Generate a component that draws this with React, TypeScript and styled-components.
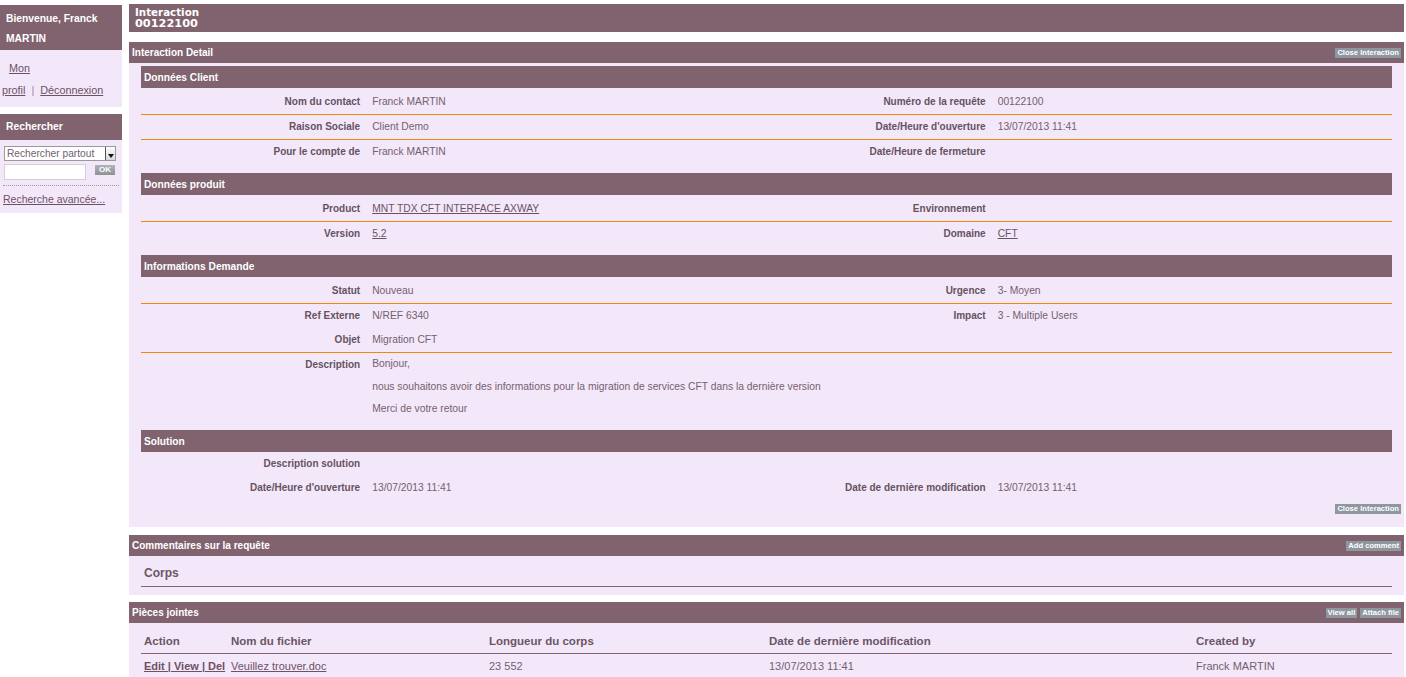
import styled, { createGlobalStyle } from 'styled-components';

const MAUVE = '#80636f';
const LAVENDER = '#f3e8fa';
const ORANGE = '#f0880a';
const LABEL = '#665260';
const VALUE = '#75606e';
const LINK = '#6d5164';

const GlobalStyle = createGlobalStyle`
    body {
        margin: 0;
        background: #fff;
        font-family: "Liberation Sans", Arial, sans-serif;
    }
`;

const Layout = styled.div`
    display: flex;
    align-items: flex-start;
    gap: 7px;
    width: 1404px;
    padding-top: 4px;
`;

/* ---------- sidebar ---------- */

const Sidebar = styled.div`
    width: 122px;
    flex: none;
    margin-top: 1px;
    display: flex;
    flex-direction: column;
    gap: 7px;
`;

const SideBox = styled.div`
    background: ${LAVENDER};
`;

const SideHeader = styled.div<{ $tall?: boolean }>`
    background: ${MAUVE};
    color: #fff;
    font-weight: bold;
    font-size: 10.3px;
    line-height: 20px;
    padding: ${(p) => (p.$tall ? '4px 6px 1px' : '3px 6px')};
`;

const WelcomeLinks = styled.div`
    padding: 7px 2px 6px;
    font-size: 10.8px;
    line-height: 22px;
    color: #9a8a98;
`;

const SideLink = styled.a<{ $indent?: boolean }>`
    color: ${LINK};
    text-decoration: underline;
    margin-left: ${(p) => (p.$indent ? '7px' : '0')};
`;

const Pipe = styled.span`
    margin: 0 6px;
`;

const SearchBody = styled.div`
    padding: 6px 3px 4px;
    display: flex;
    flex-direction: column;
`;

const SelectBox = styled.div`
    width: 112px;
    height: 15px;
    box-sizing: border-box;
    margin-left: 1px;
    background: #fff;
    border: 1px solid #9a9a9a;
    display: flex;
    align-items: center;
    justify-content: space-between;
    font-size: 10.2px;
    color: ${VALUE};
    padding-left: 2px;
`;

const SelectArrow = styled.span`
    width: 10px;
    height: 13px;
    box-sizing: border-box;
    background: linear-gradient(#fdfdfd, #d8d8d8);
    border-left: 1px solid #555;
    display: flex;
    align-items: flex-end;
    justify-content: center;
    padding-bottom: 2px;

    &::after {
        content: '';
        border-left: 3px solid transparent;
        border-right: 3px solid transparent;
        border-top: 4px solid #111;
    }
`;

const SearchRow = styled.div`
    display: flex;
    align-items: flex-start;
    gap: 9px;
    margin-top: 3px;
`;

const SearchInput = styled.div`
    width: 82px;
    height: 16px;
    box-sizing: border-box;
    margin-left: 1px;
    background: #fff;
    border: 1px solid #d6cdd8;
`;

const OkButton = styled.span`
    margin-top: 1px;
    width: 20px;
    height: 10px;
    background: linear-gradient(#b0b3b8, #8e9196);
    color: #fff;
    font-size: 8px;
    font-weight: bold;
    line-height: 10px;
    text-align: center;
`;

const DottedRule = styled.div`
    border-top: 1px dotted #9c9c9c;
    margin-top: 5px;
`;

const AdvancedLink = styled.a`
    color: ${LINK};
    font-size: 10.5px;
    line-height: 20px;
    margin-top: 3px;
    text-decoration: underline;
`;

/* ---------- main ---------- */

const Main = styled.div`
    flex: 1;
    display: flex;
    flex-direction: column;
`;

const TitleBar = styled.div`
    background: ${MAUVE};
    color: #fff;
    height: 28px;
    box-sizing: border-box;
    padding: 3px 6px 0;
    font-family: "DejaVu Sans", Verdana, sans-serif;
    font-weight: bold;
`;

const TitleLine = styled.div<{ $size: number }>`
    font-size: ${(p) => p.$size}px;
    line-height: 11px;
`;

const Section = styled.section<{ $gap: number }>`
    margin-top: ${(p) => p.$gap}px;
    background: ${LAVENDER};
`;

const SectionHeader = styled.div`
    height: 21px;
    background: ${MAUVE};
    color: #fff;
    font-weight: bold;
    font-size: 10px;
    display: flex;
    align-items: center;
    justify-content: space-between;
    padding: 0 3px;
`;

const ButtonGroup = styled.div`
    display: flex;
    gap: 3px;
`;

const SmallButton = styled.span`
    background: #8e979f;
    color: #fff;
    font-size: 7.6px;
    font-weight: bold;
    height: 10px;
    line-height: 10px;
    padding: 0 2px;
`;

const DetailBody = styled.div`
    padding: 3px 0 13px;
`;

const Inner = styled.div`
    padding: 0 12px;
    display: flex;
    flex-direction: column;
    gap: 9px;
`;

const SubHeader = styled.div<{ $tight?: boolean }>`
    height: 22px;
    line-height: 23px;
    background: ${MAUVE};
    color: #fff;
    font-weight: bold;
    font-size: 10.2px;
    padding-left: 3px;
    margin-bottom: ${(p) => (p.$tight ? '0' : '2px')};
`;

const InfoRow = styled.div<{ $divider?: boolean; $height?: number }>`
    display: grid;
    grid-template-columns: 18% 32% 18% 32%;
    height: ${(p) => p.$height ?? 24}px;
    border-bottom: ${(p) => (p.$divider ? `1px solid ${ORANGE}` : 'none')};
`;

const Label = styled.div`
    text-align: right;
    padding-right: 6px;
    font-weight: bold;
    font-size: 10px;
    line-height: 24px;
    color: ${LABEL};
`;

const Value = styled.div<{ $span?: number }>`
    grid-column: span ${(p) => p.$span ?? 1};
    padding-left: 6px;
    font-size: 10.3px;
    line-height: 24px;
    color: ${VALUE};
`;

const Paragraph = styled.div`
    line-height: 22.5px;
`;

const ValueLink = styled.a`
    color: ${LINK};
    text-decoration: underline;
`;

const Footer = styled.div`
    display: flex;
    justify-content: flex-end;
    padding: 4px 3px 0;
`;

const CommentBody = styled.div`
    padding: 8px 12px;
`;

const CorpsRow = styled.div`
    border-bottom: 1px solid ${MAUVE};
    padding: 0 3px 3px;
    line-height: 19px;
    font-size: 12px;
    font-weight: bold;
    color: #6b5664;
`;

const AttachBody = styled.div`
    padding: 6px 12px 0;
`;

const TableRow = styled.div<{ $head?: boolean }>`
    display: grid;
    grid-template-columns: 87px 258px 280px 427px 1fr;
    border-bottom: 1px solid ${(p) => (p.$head ? MAUVE : 'transparent')};
    line-height: 24px;
    font-size: ${(p) => (p.$head ? '11.5px' : '11px')};
    font-weight: ${(p) => (p.$head ? 'bold' : 'normal')};
    color: ${(p) => (p.$head ? '#6b5664' : VALUE)};
`;

const Cell = styled.div`
    padding-left: 3px;
    white-space: nowrap;
`;

const ActionLinks = styled.a`
    color: ${LINK};
    font-weight: bold;
    text-decoration: underline;
`;

type Field = { label: string; value?: string; link?: boolean };
type Row = { left: Field; right?: Field; divider?: boolean };

const clientRows: Row[] = [
    { left: { label: 'Nom du contact', value: 'Franck MARTIN' }, right: { label: 'Numéro de la requête', value: '00122100' }, divider: true },
    { left: { label: 'Raison Sociale', value: 'Client Demo' }, right: { label: "Date/Heure d'ouverture", value: '13/07/2013 11:41' }, divider: true },
    { left: { label: 'Pour le compte de', value: 'Franck MARTIN' }, right: { label: 'Date/Heure de fermeture' } }
];

const productRows: Row[] = [
    { left: { label: 'Product', value: 'MNT TDX CFT INTERFACE AXWAY', link: true }, right: { label: 'Environnement' }, divider: true },
    { left: { label: 'Version', value: '5.2', link: true }, right: { label: 'Domaine', value: 'CFT', link: true } }
];

const requestRows: Row[] = [
    { left: { label: 'Statut', value: 'Nouveau' }, right: { label: 'Urgence', value: '3- Moyen' }, divider: true },
    { left: { label: 'Ref Externe', value: 'N/REF 6340' }, right: { label: 'Impact', value: '3 - Multiple Users' } },
    { left: { label: 'Objet', value: 'Migration CFT' }, divider: true }
];

const solutionRows: Row[] = [
    { left: { label: 'Description solution' } },
    { left: { label: "Date/Heure d'ouverture", value: '13/07/2013 11:41' }, right: { label: 'Date de dernière modification', value: '13/07/2013 11:41' } }
];

const renderValue = (field?: Field) => (
    <Value>{field?.value && (field.link ? <ValueLink>{field.value}</ValueLink> : field.value)}</Value>
);

const InfoRows = ({ rows }: { rows: Row[] }) => (
    <>
        {rows.map((row) => (
            <InfoRow key={row.left.label} $divider={row.divider}>
                <Label>{row.left.label}</Label>
                {renderValue(row.left)}
                <Label>{row.right?.label}</Label>
                {renderValue(row.right)}
            </InfoRow>
        ))}
    </>
);

const App = () => (
    <>
        <GlobalStyle />
        <Layout>
            <Sidebar>
                <SideBox>
                    <SideHeader $tall>
                        Bienvenue, Franck
                        <br />
                        MARTIN
                    </SideHeader>
                    <WelcomeLinks>
                        <SideLink $indent>Mon</SideLink>
                        <br />
                        <SideLink>profil</SideLink>
                        <Pipe>|</Pipe>
                        <SideLink>Déconnexion</SideLink>
                    </WelcomeLinks>
                </SideBox>
                <SideBox>
                    <SideHeader>Rechercher</SideHeader>
                    <SearchBody>
                        <SelectBox>
                            Rechercher partout
                            <SelectArrow />
                        </SelectBox>
                        <SearchRow>
                            <SearchInput />
                            <OkButton>OK</OkButton>
                        </SearchRow>
                        <DottedRule />
                        <AdvancedLink>Recherche avancée...</AdvancedLink>
                    </SearchBody>
                </SideBox>
            </Sidebar>

            <Main>
                <TitleBar>
                    <TitleLine $size={10.3}>Interaction</TitleLine>
                    <TitleLine $size={11.3}>00122100</TitleLine>
                </TitleBar>

                <Section $gap={10}>
                    <SectionHeader>
                        Interaction Detail
                        <SmallButton>Close Interaction</SmallButton>
                    </SectionHeader>
                    <DetailBody>
                        <Inner>
                            <div>
                                <SubHeader>Données Client</SubHeader>
                                <InfoRows rows={clientRows} />
                            </div>
                            <div>
                                <SubHeader>Données produit</SubHeader>
                                <InfoRows rows={productRows} />
                            </div>
                            <div>
                                <SubHeader>Informations Demande</SubHeader>
                                <InfoRows rows={requestRows} />
                                <InfoRow $height={68}>
                                    <Label>Description</Label>
                                    <Value $span={3}>
                                        <Paragraph>Bonjour,</Paragraph>
                                        <Paragraph>
                                            nous souhaitons avoir des informations pour la migration de services CFT dans la dernière version
                                        </Paragraph>
                                        <Paragraph>Merci de votre retour</Paragraph>
                                    </Value>
                                </InfoRow>
                            </div>
                            <div>
                                <SubHeader $tight>Solution</SubHeader>
                                <InfoRows rows={solutionRows} />
                            </div>
                        </Inner>
                        <Footer>
                            <SmallButton>Close Interaction</SmallButton>
                        </Footer>
                    </DetailBody>
                </Section>

                <Section $gap={8}>
                    <SectionHeader>
                        Commentaires sur la requête
                        <SmallButton>Add comment</SmallButton>
                    </SectionHeader>
                    <CommentBody>
                        <CorpsRow>Corps</CorpsRow>
                    </CommentBody>
                </Section>

                <Section $gap={7}>
                    <SectionHeader>
                        Pièces jointes
                        <ButtonGroup>
                            <SmallButton>View all</SmallButton>
                            <SmallButton>Attach file</SmallButton>
                        </ButtonGroup>
                    </SectionHeader>
                    <AttachBody>
                        <TableRow $head>
                            <Cell>Action</Cell>
                            <Cell>Nom du fichier</Cell>
                            <Cell>Longueur du corps</Cell>
                            <Cell>Date de dernière modification</Cell>
                            <Cell>Created by</Cell>
                        </TableRow>
                        <TableRow>
                            <Cell>
                                <ActionLinks>Edit | View | Del</ActionLinks>
                            </Cell>
                            <Cell>
                                <ValueLink>Veuillez trouver.doc</ValueLink>
                            </Cell>
                            <Cell>23 552</Cell>
                            <Cell>13/07/2013 11:41</Cell>
                            <Cell>Franck MARTIN</Cell>
                        </TableRow>
                    </AttachBody>
                </Section>
            </Main>
        </Layout>
    </>
);

export default App;
